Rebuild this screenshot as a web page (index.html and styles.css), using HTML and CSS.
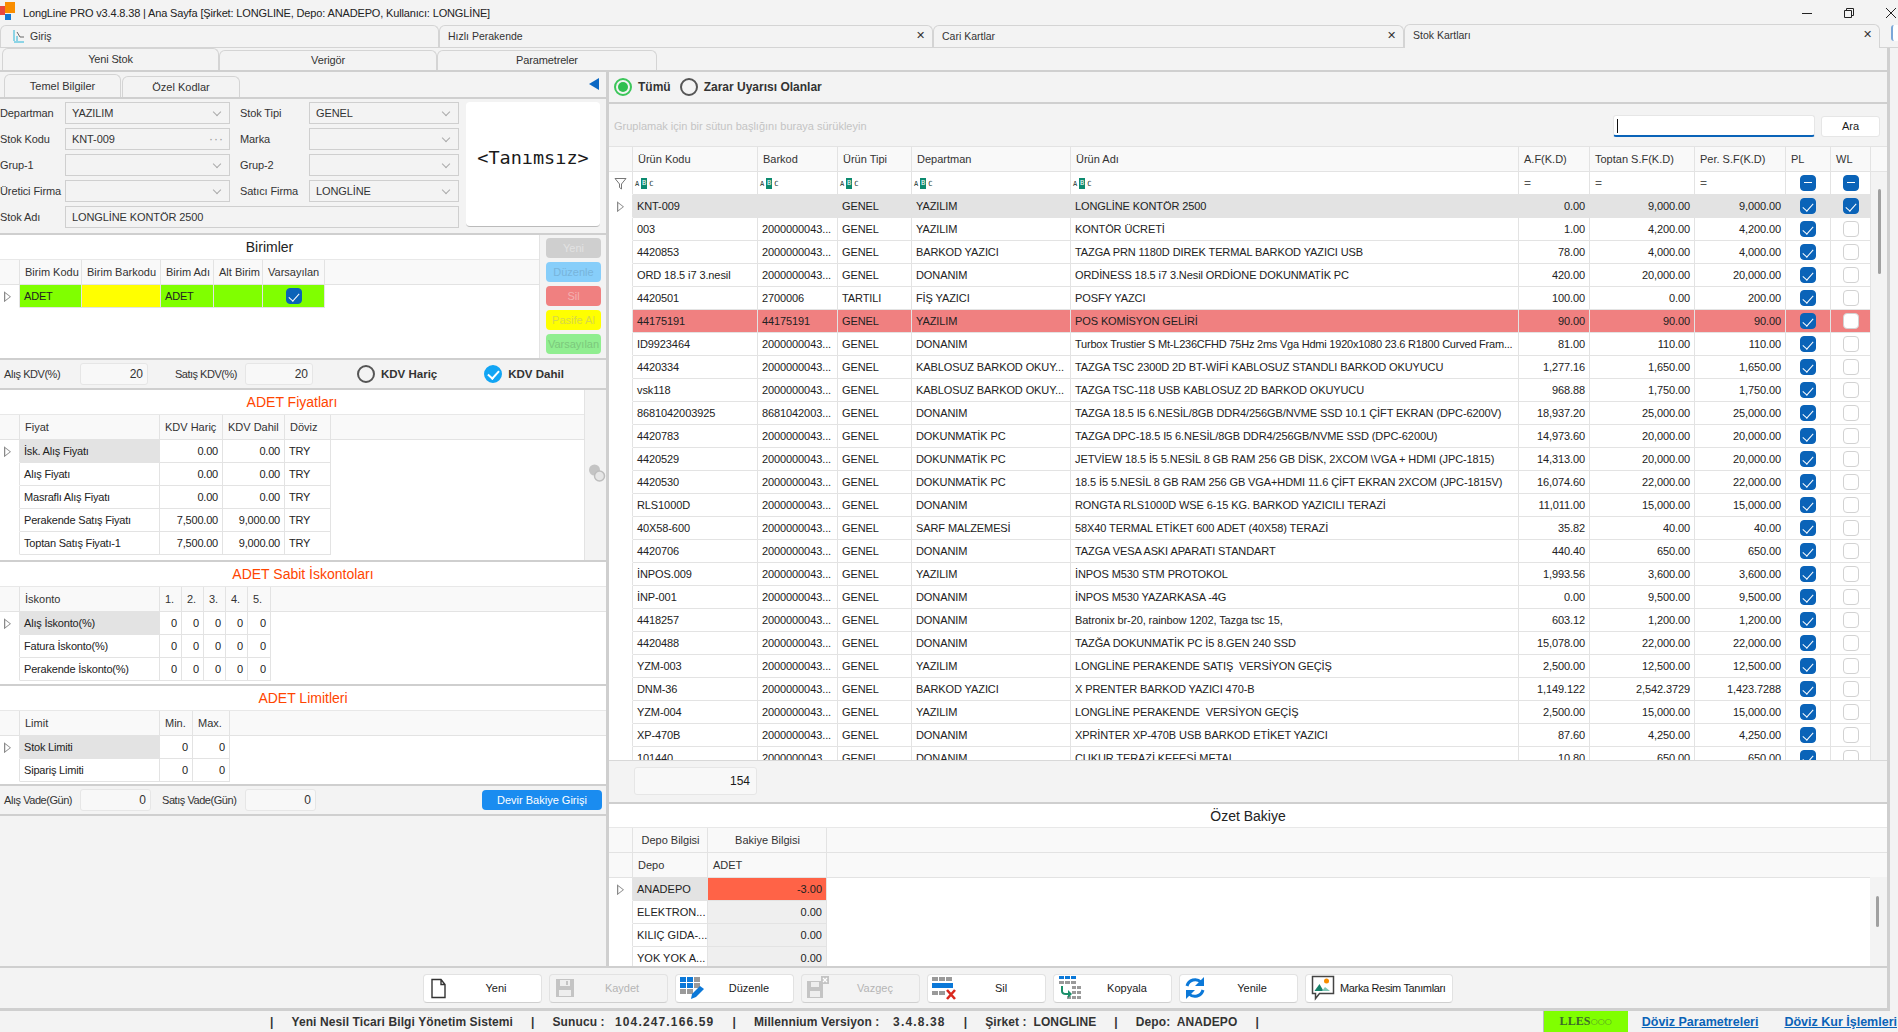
FILE: index.html
```html
<!DOCTYPE html>
<html lang="tr">

<head>
    <meta charset="UTF-8">
    <meta name="viewport" content="width=device-width, initial-scale=1.0">
    <title>LongLine PRO</title>
    <link rel="stylesheet" href="styles.css">
</head>

<body>

    <!-- Baslik -->
    <div class="titlebar">
        <svg class="app-logo" width="16" height="19" viewBox="0 0 16 19">
            <rect x="0" y="4" width="5" height="9" fill="#e8483f"/>
            <rect x="5" y="0" width="10" height="11" fill="#f98d00"/>
            <rect x="5" y="12" width="6" height="6" fill="#1277d3"/>
        </svg>
        <span class="app-title">LongLine PRO v3.4.8.38 | Ana Sayfa [Şirket: LONGLINE, Depo: ANADEPO, Kullanıcı: LONGLİNE]</span>
        <div class="winbtns">
            <svg width="12" height="12" viewBox="0 0 12 12"><path d="M1 6.5h10" stroke="#222" fill="none"/></svg>
            <svg width="12" height="12" viewBox="0 0 12 12"><path d="M1.5 3.5h7v7h-7zM3.5 3.5v-2h7v7h-2" stroke="#222" fill="none"/></svg>
            <svg width="12" height="12" viewBox="0 0 12 12"><path d="M1 1l10 10M11 1L1 11" stroke="#222" fill="none"/></svg>
        </div>
    </div>

    <div class="doc-tabs">
        <div class="doc-tab tab-giris">
            <svg width="13" height="16" viewBox="0 0 13 16"><path d="M2 2v11M5 8v5M2 14h10" stroke="#27b5d8" fill="none"/><path d="M5 4l3 5h4" stroke="#666" fill="none"/></svg>
            Giriş
        </div>
        <div class="doc-tab tab-hizli">Hızlı Perakende <span class="tab-x">✕</span></div>
        <div class="doc-tab tab-cari">Cari Kartlar <span class="tab-x">✕</span></div>
        <div class="doc-tab tab-stok">Stok Kartları <span class="tab-x">✕</span></div>
        <div class="doc-more"></div>
    </div>

    <div class="page">
        <div class="sub-tabs">
            <div class="sub-tab active">Yeni Stok</div>
            <div class="sub-tab">Verigör</div>
            <div class="sub-tab">Parametreler</div>
        </div>

        <div class="main">

            <!-- Sol taraf -->
            <div class="left">
                <div class="left-tabs">
                    <div class="left-tab active">Temel Bilgiler</div>
                    <div class="left-tab">Özel Kodlar</div>
                    <div class="collapse"></div>
                </div>

                <div class="form-box">
                    <div class="form-grid">
                        <label>Departman</label>
                        <div class="field combo">YAZILIM</div>
                        <label class="lbl2">Stok Tipi</label>
                        <div class="field combo">GENEL</div>
                        <label>Stok Kodu</label>
                        <div class="field dots">KNT-009<span>···</span></div>
                        <label class="lbl2">Marka</label>
                        <div class="field combo"></div>
                        <label>Grup-1</label>
                        <div class="field combo"></div>
                        <label class="lbl2">Grup-2</label>
                        <div class="field combo"></div>
                        <label>Üretici Firma</label>
                        <div class="field combo"></div>
                        <label class="lbl2">Satıcı Firma</label>
                        <div class="field combo">LONGLİNE</div>
                        <label>Stok Adı</label>
                        <div class="field wide">LONGLİNE KONTÖR 2500</div>
                    </div>
                    <div class="pic-box">&lt;Tanımsız&gt;</div>
                </div>

                <div class="units">
                    <div class="units-main">
                        <div class="sec-title">Birimler</div>
                        <table class="grid t-units">
                            <tr>
                                <th class="ind"></th><th>Birim Kodu</th><th>Birim Barkodu</th><th>Birim Adı</th><th>Alt Birim</th><th>Varsayılan</th><th class="rest"></th>
                            </tr>
                            <tr>
                                <td class="ind"><i class="arrow"></i></td>
                                <td class="lime">ADET</td><td class="yellow"></td><td class="lime">ADET</td><td class="lime"></td>
                                <td class="lime ctr"><i class="chk on"></i></td>
                            </tr>
                        </table>
                    </div>
                    <div class="units-btns">
                        <div class="ubtn u-yeni">Yeni</div>
                        <div class="ubtn u-duz">Düzenle</div>
                        <div class="ubtn u-sil">Sil</div>
                        <div class="ubtn u-pas">Pasife Al</div>
                        <div class="ubtn u-var">Varsayılan</div>
                    </div>
                </div>

                <div class="kdv-row">
                    <span class="k-lbl">Alış KDV(%)</span>
                    <div class="num-in k-in">20</div>
                    <span class="k-lbl2">Satış KDV(%)</span>
                    <div class="num-in k-in">20</div>
                    <i class="radio r-haric"></i><b class="r-text">KDV Hariç</b>
                    <i class="radio checked r-dahil"></i><b class="r-text">KDV Dahil</b>
                </div>

                <div class="prices">
                    <div class="prices-main">
                        <div class="sec-title red">ADET Fiyatları</div>
                        <table class="grid t-price">
                            <tr><th class="ind"></th><th>Fiyat</th><th>KDV Hariç</th><th>KDV Dahil</th><th>Döviz</th><th class="rest"></th></tr>
                            <tr><td class="ind"><i class="arrow"></i></td><td class="sel">İsk. Alış Fiyatı</td><td class="r">0.00</td><td class="r">0.00</td><td>TRY</td></tr>
                            <tr><td class="ind"></td><td>Alış Fiyatı</td><td class="r">0.00</td><td class="r">0.00</td><td>TRY</td></tr>
                            <tr><td class="ind"></td><td>Masraflı Alış Fiyatı</td><td class="r">0.00</td><td class="r">0.00</td><td>TRY</td></tr>
                            <tr><td class="ind"></td><td>Perakende Satış Fiyatı</td><td class="r">7,500.00</td><td class="r">9,000.00</td><td>TRY</td></tr>
                            <tr><td class="ind"></td><td>Toptan Satış Fiyatı-1</td><td class="r">7,500.00</td><td class="r">9,000.00</td><td>TRY</td></tr>
                        </table>
                    </div>
                    <div class="coin-strip">
                        <svg width="18" height="20" viewBox="0 0 18 20">
                            <circle cx="6.5" cy="7" r="5.5" fill="#c4c4c4"/>
                            <circle cx="11.5" cy="13" r="5" fill="#e6e6e6" stroke="#bdbdbd" stroke-width="1.5"/>
                        </svg>
                    </div>
                </div>

                <div class="section sec-disc">
                    <div class="sec-title red">ADET Sabit İskontoları</div>
                    <table class="grid t-disc">
                        <tr><th class="ind"></th><th>İskonto</th><th>1.</th><th>2.</th><th>3.</th><th>4.</th><th>5.</th><th class="rest"></th></tr>
                        <tr><td class="ind"><i class="arrow"></i></td><td class="sel">Alış İskonto(%)</td><td class="r">0</td><td class="r">0</td><td class="r">0</td><td class="r">0</td><td class="r">0</td></tr>
                        <tr><td class="ind"></td><td>Fatura İskonto(%)</td><td class="r">0</td><td class="r">0</td><td class="r">0</td><td class="r">0</td><td class="r">0</td></tr>
                        <tr><td class="ind"></td><td>Perakende İskonto(%)</td><td class="r">0</td><td class="r">0</td><td class="r">0</td><td class="r">0</td><td class="r">0</td></tr>
                    </table>
                </div>

                <div class="section sec-limit">
                    <div class="sec-title red">ADET Limitleri</div>
                    <table class="grid t-limit">
                        <tr><th class="ind"></th><th>Limit</th><th>Min.</th><th>Max.</th><th class="rest"></th></tr>
                        <tr><td class="ind"><i class="arrow"></i></td><td class="sel">Stok Limiti</td><td class="r">0</td><td class="r">0</td></tr>
                        <tr><td class="ind"></td><td>Sipariş Limiti</td><td class="r">0</td><td class="r">0</td></tr>
                    </table>
                </div>

                <div class="vade-row">
                    <span class="k-lbl">Alış Vade(Gün)</span>
                    <div class="num-in v-in">0</div>
                    <span class="v-lbl2">Satış Vade(Gün)</span>
                    <div class="num-in v-in">0</div>
                    <div class="devir-btn">Devir Bakiye Girişi</div>
                </div>
            </div>

            <!-- Sag taraf -->
            <div class="right">
                <div class="radio-bar">
                    <i class="radio green"></i><b class="r-text">Tümü</b>
                    <i class="radio r-zarar"></i><b class="r-text">Zarar Uyarısı Olanlar</b>
                </div>

                <div class="group-bar">
                    <span class="group-hint">Gruplamak için bir sütun başlığını buraya sürükleyin</span>
                    <div class="search-in"><i class="caret"></i></div>
                    <div class="ara-btn">Ara</div>
                </div>

                <div class="stock-wrap">
                    <table class="grid t-stock">
                        <tr>
                            <th class="ind"></th><th>Ürün Kodu</th><th>Barkod</th><th>Ürün Tipi</th><th>Departman</th><th>Ürün Adı</th><th>A.F(K.D)</th><th>Toptan S.F(K.D)</th><th>Per. S.F(K.D)</th><th>PL</th><th>WL</th><th class="rest"></th>
                        </tr>
                        <tr class="filter">
                            <td class="ind"><svg class="funnel" width="13" height="13" viewBox="0 0 13 13"><path d="M1 1.5h11L7.5 7v5L5.5 10.5V7z" fill="none" stroke="#777"/></svg></td>
                            <td><span class="abc">A<em>B</em>C</span></td><td><span class="abc">A<em>B</em>C</span></td><td><span class="abc">A<em>B</em>C</span></td><td><span class="abc">A<em>B</em>C</span></td><td><span class="abc">A<em>B</em>C</span></td>
                            <td>=</td><td>=</td><td>=</td>
                            <td class="ctr"><i class="chk mid"></i></td><td class="ctr"><i class="chk mid"></i></td>
                        </tr>
                        <tr class="cur"><td class="ind"><i class="arrow"></i></td><td>KNT-009</td><td></td><td>GENEL</td><td>YAZILIM</td><td>LONGLİNE KONTÖR 2500</td><td>0.00</td><td>9,000.00</td><td>9,000.00</td><td class="ctr"><i class="chk on"></i></td><td class="ctr"><i class="chk on"></i></td></tr>
                        <tr><td class="ind"></td><td>003</td><td>2000000043...</td><td>GENEL</td><td>YAZILIM</td><td>KONTÖR ÜCRETİ</td><td>1.00</td><td>4,200.00</td><td>4,200.00</td><td class="ctr"><i class="chk on"></i></td><td class="ctr"><i class="chk"></i></td></tr>
                        <tr><td class="ind"></td><td>4420853</td><td>2000000043...</td><td>GENEL</td><td>BARKOD YAZICI</td><td>TAZGA PRN 1180D DIREK TERMAL BARKOD YAZICI USB</td><td>78.00</td><td>4,000.00</td><td>4,000.00</td><td class="ctr"><i class="chk on"></i></td><td class="ctr"><i class="chk"></i></td></tr>
                        <tr><td class="ind"></td><td>ORD 18.5 i7 3.nesil</td><td>2000000043...</td><td>GENEL</td><td>DONANIM</td><td>ORDİNESS 18.5 i7 3.Nesil ORDİONE DOKUNMATİK PC</td><td>420.00</td><td>20,000.00</td><td>20,000.00</td><td class="ctr"><i class="chk on"></i></td><td class="ctr"><i class="chk"></i></td></tr>
                        <tr><td class="ind"></td><td>4420501</td><td>2700006</td><td>TARTILI</td><td>FİŞ YAZICI</td><td>POSFY YAZCI</td><td>100.00</td><td>0.00</td><td>200.00</td><td class="ctr"><i class="chk on"></i></td><td class="ctr"><i class="chk"></i></td></tr>
                        <tr class="loss"><td class="ind"></td><td>44175191</td><td>44175191</td><td>GENEL</td><td>YAZILIM</td><td>POS KOMİSYON GELİRİ</td><td>90.00</td><td>90.00</td><td>90.00</td><td class="ctr"><i class="chk on"></i></td><td class="ctr"><i class="chk"></i></td></tr>
                        <tr><td class="ind"></td><td>ID9923464</td><td>2000000043...</td><td>GENEL</td><td>DONANIM</td><td class="tight">Turbox Trustier S Mt-L236CFHD 75Hz 2ms Vga Hdmi 1920x1080 23.6 R1800 Curved Fram...</td><td>81.00</td><td>110.00</td><td>110.00</td><td class="ctr"><i class="chk on"></i></td><td class="ctr"><i class="chk"></i></td></tr>
                        <tr><td class="ind"></td><td>4420334</td><td>2000000043...</td><td>GENEL</td><td>KABLOSUZ BARKOD OKUY...</td><td>TAZGA TSC 2300D 2D BT-WİFİ KABLOSUZ STANDLI BARKOD OKUYUCU</td><td>1,277.16</td><td>1,650.00</td><td>1,650.00</td><td class="ctr"><i class="chk on"></i></td><td class="ctr"><i class="chk"></i></td></tr>
                        <tr><td class="ind"></td><td>vsk118</td><td>2000000043...</td><td>GENEL</td><td>KABLOSUZ BARKOD OKUY...</td><td>TAZGA TSC-118 USB KABLOSUZ 2D BARKOD OKUYUCU</td><td>968.88</td><td>1,750.00</td><td>1,750.00</td><td class="ctr"><i class="chk on"></i></td><td class="ctr"><i class="chk"></i></td></tr>
                        <tr><td class="ind"></td><td>8681042003925</td><td>8681042003...</td><td>GENEL</td><td>DONANIM</td><td>TAZGA 18.5 I5 6.NESİL/8GB DDR4/256GB/NVME SSD 10.1 ÇİFT EKRAN (DPC-6200V)</td><td>18,937.20</td><td>25,000.00</td><td>25,000.00</td><td class="ctr"><i class="chk on"></i></td><td class="ctr"><i class="chk"></i></td></tr>
                        <tr><td class="ind"></td><td>4420783</td><td>2000000043...</td><td>GENEL</td><td>DOKUNMATİK PC</td><td>TAZGA DPC-18.5 I5 6.NESİL/8GB DDR4/256GB/NVME SSD (DPC-6200U)</td><td>14,973.60</td><td>20,000.00</td><td>20,000.00</td><td class="ctr"><i class="chk on"></i></td><td class="ctr"><i class="chk"></i></td></tr>
                        <tr><td class="ind"></td><td>4420529</td><td>2000000043...</td><td>GENEL</td><td>DOKUNMATİK PC</td><td>JETVİEW 18.5 İ5 5.NESİL 8 GB RAM 256 GB DİSK, 2XCOM \VGA + HDMI (JPC-1815)</td><td>14,313.00</td><td>20,000.00</td><td>20,000.00</td><td class="ctr"><i class="chk on"></i></td><td class="ctr"><i class="chk"></i></td></tr>
                        <tr><td class="ind"></td><td>4420530</td><td>2000000043...</td><td>GENEL</td><td>DOKUNMATİK PC</td><td>18.5 İ5 5.NESİL 8 GB RAM 256 GB VGA+HDMI 11.6 ÇİFT EKRAN 2XCOM (JPC-1815V)</td><td>16,074.60</td><td>22,000.00</td><td>22,000.00</td><td class="ctr"><i class="chk on"></i></td><td class="ctr"><i class="chk"></i></td></tr>
                        <tr><td class="ind"></td><td>RLS1000D</td><td>2000000043...</td><td>GENEL</td><td>DONANIM</td><td>RONGTA RLS1000D WSE 6-15 KG. BARKOD YAZICILI TERAZİ</td><td>11,011.00</td><td>15,000.00</td><td>15,000.00</td><td class="ctr"><i class="chk on"></i></td><td class="ctr"><i class="chk"></i></td></tr>
                        <tr><td class="ind"></td><td>40X58-600</td><td>2000000043...</td><td>GENEL</td><td>SARF MALZEMESİ</td><td>58X40 TERMAL ETİKET 600 ADET (40X58) TERAZİ</td><td>35.82</td><td>40.00</td><td>40.00</td><td class="ctr"><i class="chk on"></i></td><td class="ctr"><i class="chk"></i></td></tr>
                        <tr><td class="ind"></td><td>4420706</td><td>2000000043...</td><td>GENEL</td><td>DONANIM</td><td>TAZGA VESA ASKI APARATI STANDART</td><td>440.40</td><td>650.00</td><td>650.00</td><td class="ctr"><i class="chk on"></i></td><td class="ctr"><i class="chk"></i></td></tr>
                        <tr><td class="ind"></td><td>İNPOS.009</td><td>2000000043...</td><td>GENEL</td><td>YAZILIM</td><td>İNPOS M530 STM PROTOKOL</td><td>1,993.56</td><td>3,600.00</td><td>3,600.00</td><td class="ctr"><i class="chk on"></i></td><td class="ctr"><i class="chk"></i></td></tr>
                        <tr><td class="ind"></td><td>İNP-001</td><td>2000000043...</td><td>GENEL</td><td>DONANIM</td><td>İNPOS M530 YAZARKASA -4G</td><td>0.00</td><td>9,500.00</td><td>9,500.00</td><td class="ctr"><i class="chk on"></i></td><td class="ctr"><i class="chk"></i></td></tr>
                        <tr><td class="ind"></td><td>4418257</td><td>2000000043...</td><td>GENEL</td><td>DONANIM</td><td>Batronix br-20, rainbow 1202, Tazga tsc 15,</td><td>603.12</td><td>1,200.00</td><td>1,200.00</td><td class="ctr"><i class="chk on"></i></td><td class="ctr"><i class="chk"></i></td></tr>
                        <tr><td class="ind"></td><td>4420488</td><td>2000000043...</td><td>GENEL</td><td>DONANIM</td><td>TAZĞA DOKUNMATİK PC İ5 8.GEN 240 SSD</td><td>15,078.00</td><td>22,000.00</td><td>22,000.00</td><td class="ctr"><i class="chk on"></i></td><td class="ctr"><i class="chk"></i></td></tr>
                        <tr><td class="ind"></td><td>YZM-003</td><td>2000000043...</td><td>GENEL</td><td>YAZILIM</td><td>LONGLİNE PERAKENDE SATIŞ&nbsp; VERSİYON GEÇİŞ</td><td>2,500.00</td><td>12,500.00</td><td>12,500.00</td><td class="ctr"><i class="chk on"></i></td><td class="ctr"><i class="chk"></i></td></tr>
                        <tr><td class="ind"></td><td>DNM-36</td><td>2000000043...</td><td>GENEL</td><td>BARKOD YAZICI</td><td>X PRENTER BARKOD YAZICI 470-B</td><td>1,149.122</td><td>2,542.3729</td><td>1,423.7288</td><td class="ctr"><i class="chk on"></i></td><td class="ctr"><i class="chk"></i></td></tr>
                        <tr><td class="ind"></td><td>YZM-004</td><td>2000000043...</td><td>GENEL</td><td>YAZILIM</td><td>LONGLİNE PERAKENDE&nbsp; VERSİYON GEÇİŞ</td><td>2,500.00</td><td>15,000.00</td><td>15,000.00</td><td class="ctr"><i class="chk on"></i></td><td class="ctr"><i class="chk"></i></td></tr>
                        <tr><td class="ind"></td><td>XP-470B</td><td>2000000043...</td><td>GENEL</td><td>DONANIM</td><td>XPRİNTER XP-470B USB BARKOD ETİKET YAZICI</td><td>87.60</td><td>4,250.00</td><td>4,250.00</td><td class="ctr"><i class="chk on"></i></td><td class="ctr"><i class="chk"></i></td></tr>
                        <tr><td class="ind"></td><td>101440</td><td>2000000043...</td><td>GENEL</td><td>DONANIM</td><td>ÇUKUR TERAZİ KEFESİ METAL</td><td>10.80</td><td>650.00</td><td>650.00</td><td class="ctr"><i class="chk on"></i></td><td class="ctr"><i class="chk"></i></td></tr>
                    </table>
                    <div class="vscroll v-stock"></div>
                </div>

                <div class="total-row">
                    <div class="total-box">154</div>
                </div>

                <div class="balance">
                    <div class="sec-title">Özet Bakiye</div>
                    <table class="grid t-bal">
                        <tr class="band"><th class="ind"></th><th>Depo Bilgisi</th><th>Bakiye Bilgisi</th><th class="rest"></th></tr>
                        <tr class="heads"><th class="ind"></th><th>Depo</th><th>ADET</th><th class="rest"></th></tr>
                        <tr><td class="ind"><i class="arrow"></i></td><td class="sel">ANADEPO</td><td class="r minus">-3.00</td></tr>
                        <tr><td class="ind"></td><td>ELEKTRON...</td><td class="r zero">0.00</td></tr>
                        <tr><td class="ind"></td><td>KILIÇ GIDA-...</td><td class="r zero">0.00</td></tr>
                        <tr><td class="ind"></td><td>YOK YOK A...</td><td class="r zero">0.00</td></tr>
                    </table>
                    <div class="bal-side"></div>
                    <div class="vscroll v-bal"></div>
                </div>
            </div>
        </div>

        <!-- Alt butonlar -->
        <div class="toolbar">
            <div class="tbtn">
                <svg width="24" height="24" viewBox="0 0 24 24"><path d="M5 3.5h9l4 5v13H5z M14 3.5v5h4" fill="#fff" stroke="#333" stroke-width="1.4"/></svg>
                <span>Yeni</span>
            </div>
            <div class="tbtn off">
                <svg width="24" height="24" viewBox="0 0 24 24"><path d="M3 3h18v18H3z" fill="#c4c4c4"/><path d="M7 4h10v6H7z" fill="#eee"/><path d="M13 5h2v4h-2z" fill="#c4c4c4"/><path d="M6 14h12v6H6z" fill="#eee"/></svg>
                <span>Kaydet</span>
            </div>
            <div class="tbtn">
                <svg width="26" height="26" viewBox="0 0 26 26">
                    <path d="M1 2h6v5H1zM8 2h6v5H8z" fill="#0b78d8"/><path d="M15 2h6v5h-6z" fill="#9a9a9a"/>
                    <path d="M1 8h6v5H1zM8 8h6v5H8z" fill="#0b78d8"/><path d="M15 8h6v5h-6z" fill="#9a9a9a"/>
                    <path d="M1 14h6v5H1zM8 14h6v5H8z" fill="#9a9a9a"/>
                    <path d="M12 24l1-5 8-8 4 3-8 8z" fill="#0b78d8"/>
                </svg>
                <span>Düzenle</span>
            </div>
            <div class="tbtn off">
                <svg width="26" height="26" viewBox="0 0 26 26"><path d="M2 6h16v17H2z" fill="#c4c4c4"/><path d="M6 7h8v5H6z" fill="#eee"/><path d="M5 16h10v6H5z" fill="#eee"/><path d="M16 1h8v8h-8z" fill="#c4c4c4"/><path d="M18 3l4 4M22 3l-4 4" stroke="#fff" stroke-width="1.3"/></svg>
                <span>Vazgeç</span>
            </div>
            <div class="tbtn">
                <svg width="26" height="26" viewBox="0 0 26 26">
                    <path d="M1 2h6v4H1zM8 2h6v4H8zM15 2h6v4h-6z" fill="#9a9a9a"/>
                    <path d="M1 8h21v5H1z" fill="#0b78d8"/>
                    <path d="M1 16h6v4H1zM8 16h6v4H8z" fill="#9a9a9a"/>
                    <path d="M16 15l8 9M24 15l-8 9" stroke="#d9281e" stroke-width="2.6"/>
                </svg>
                <span>Sil</span>
            </div>
            <div class="tbtn">
                <svg width="26" height="26" viewBox="0 0 26 26">
                    <path d="M2 1h5v3H2zM8 1h5v3H8zM14 1h5v3h-5z" fill="#0b78d8"/>
                    <path d="M2 6h5v3H2zM8 6h5v3H8zM14 6h5v3h-5zM15 11h4v3h-4zM20 11h4v3h-4zM15 16h4v3h-4zM20 16h4v3h-4zM10 21h4v3h-4zM15 21h4v3h-4zM20 21h4v3h-4z" fill="#9a9a9a"/>
                    <path d="M5 11v5q0 3 4 3h3" fill="none" stroke="#1a8f6a" stroke-width="2"/>
                    <path d="M11 15l4 4-4 4z" fill="#1a8f6a"/>
                </svg>
                <span>Kopyala</span>
            </div>
            <div class="tbtn">
                <svg width="24" height="24" viewBox="0 0 24 24">
                    <path d="M4 10a8.5 8.5 0 0 1 14-4" fill="none" stroke="#0b78d8" stroke-width="3"/>
                    <path d="M21 1v9h-9z" fill="#0b78d8"/>
                    <path d="M20 14a8.5 8.5 0 0 1-14 4" fill="none" stroke="#0b78d8" stroke-width="3"/>
                    <path d="M3 23v-9h9z" fill="#0b78d8"/>
                </svg>
                <span>Yenile</span>
            </div>
            <div class="tbtn wide">
                <svg width="24" height="26" viewBox="0 0 24 26">
                    <path d="M1.5 1.5h21v17h-14l-4 5v-5h-3z" fill="#fff" stroke="#444" stroke-width="1.5"/>
                    <circle cx="15.500" cy="6" r="2.500" fill="#f98d00"/>
                    <path d="M3.500 16l5-7 4 7z" fill="#14806a"/>
                    <path d="M11 16l3-4 5 4z" fill="#7cc4b4"/>
                </svg>
                <span>Marka Resim Tanımları</span>
            </div>
        </div>
    </div>

    <!-- Durum cubugu -->
    <div class="statusbar">
        <span>|</span>
        <span>Yeni Nesil Ticari Bilgi Yönetim Sistemi</span>
        <span>|</span>
        <span>Sunucu :&nbsp;&nbsp; <em class="val">104.247.166.59</em></span>
        <span>|</span>
        <span>Millennium Versiyon :&nbsp;&nbsp;&nbsp; <em class="val">3.4.8.38</em></span>
        <span>|</span>
        <span>Şirket :&nbsp; LONGLINE</span>
        <span>|</span>
        <span>Depo:&nbsp; ANADEPO</span>
        <span>|</span>
        <div class="lles">LLES<small>○○○</small></div>
        <a href="#" class="link l1">Döviz Parametreleri</a>
        <a href="#" class="link l2">Döviz Kur İşlemleri</a>
    </div>

</body>

</html>
```

FILE: styles.css
```css
* {
    box-sizing: border-box;
}

body {
    margin: 0;
    width: 1898px;
    height: 1032px;
    overflow: hidden;
    background: #f3f3f3;
    color: #1a1a1a;
    font-family: 'Liberation Sans', Arial, sans-serif;
    font-size: 11px;
    display: flex;
    flex-direction: column;
}

/* Baslik */
.titlebar {
    height: 25px;
    flex: none;
    display: flex;
    align-items: center;
}

.app-logo {
    margin-top: -2px;
}

.app-title {
    margin-left: 7px;
    font-size: 11px;
    letter-spacing: -0.15px;
    color: #222;
}

.winbtns {
    margin-left: auto;
    display: flex;
    gap: 30px;
    padding-right: 1px;
}

/* Ust sekmeler */
.doc-tabs {
    height: 23px;
    flex: none;
    display: flex;
    align-items: flex-end;
    border-bottom: 1px solid #d4d4d4;
}

.doc-tab {
    height: 22px;
    display: flex;
    align-items: center;
    gap: 5px;
    padding: 0 7px 2px 8px;
    border: 1px solid #d4d4d4;
    border-bottom: none;
    border-radius: 6px 6px 0 0;
    font-size: 10.500px;
    color: #333;
    position: relative;
}

.tab-giris { width: 439px; padding-left: 11px; }
.tab-hizli { width: 494px; }
.tab-cari { width: 471px; }

.tab-stok {
    width: 476px;
    height: 24px;
    margin-bottom: -1px;
    background: #f3f3f3;
    padding-bottom: 4px;
}

.tab-x {
    margin-left: auto;
    font-size: 11px;
    color: #333;
}

.doc-more {
    width: 7px;
    height: 16px;
    margin: 0 0 6px 11px;
    background: #fff;
    border-left: 2px solid #7aa7d8;
    border-radius: 3px 0 0 3px;
}

.page {
    width: 1890px;
    flex: 1;
    display: flex;
    flex-direction: column;
    border-right: 3px solid #cfcfcf;
    min-height: 0;
}

/* Alt sekmeler */
.sub-tabs {
    height: 24px;
    flex: none;
    display: flex;
    align-items: flex-end;
    padding-left: 2px;
    border-bottom: 2px solid #cfcfcf;
}

.sub-tab {
    width: 218px;
    height: 20px;
    display: flex;
    align-items: center;
    justify-content: center;
    border: 1px solid #d4d4d4;
    border-bottom: none;
    border-radius: 6px 6px 0 0;
    padding-bottom: 1px;
    letter-spacing: -0.15px;
    color: #333;
}

.sub-tab:nth-child(3) { width: 220px; }
.sub-tab.active { width: 217px; height: 22px; }

.main {
    flex: 1;
    display: flex;
    min-height: 0;
}

/* Sol taraf */
.left {
    width: 609px;
    flex: none;
    border-right: 3px solid #cfcfcf;
    display: flex;
    flex-direction: column;
}

.left-tabs {
    height: 27px;
    flex: none;
    display: flex;
    align-items: flex-end;
    padding-left: 4px;
    border-bottom: 2px solid #cfcfcf;
    padding-top: 2px;
}

.left-tab {
    width: 118px;
    height: 21px;
    display: flex;
    align-items: center;
    justify-content: center;
    border: 1px solid #d4d4d4;
    border-bottom: none;
    border-radius: 6px 6px 0 0;
    color: #333;
}

.left-tab.active { width: 117px; height: 23px; }
.left-tab + .left-tab { margin-left: 1px; }

.collapse {
    margin: 0 7px 7px auto;
    width: 0;
    height: 0;
    border-top: 6px solid transparent;
    border-bottom: 6px solid transparent;
    border-right: 10px solid #0b68c4;
}

.form-box {
    height: 136px;
    flex: none;
    display: flex;
    padding-top: 3px;
    border-bottom: 2px solid #cfcfcf;
}

.form-grid {
    width: 459px;
    display: grid;
    grid-template-columns: 65px 165px 79px 150px;
    grid-auto-rows: 22px;
    row-gap: 4px;
}

.form-grid label {
    display: flex;
    align-items: center;
    letter-spacing: -0.1px;
    color: #333;
    white-space: nowrap;
}

.form-grid .lbl2 {
    padding-left: 10px;
}

.field {
    border: 1px solid #cfcfcf;
    display: flex;
    align-items: center;
    padding-left: 6px;
    font-size: 11px;
    letter-spacing: -0.1px;
    color: #333;
    position: relative;
}

.field.wide {
    grid-column: span 3;
}

.combo::after {
    content: "";
    position: absolute;
    right: 9px;
    top: 6px;
    width: 5px;
    height: 5px;
    border-right: 1px solid #aaa;
    border-bottom: 1px solid #aaa;
    transform: rotate(45deg);
}

.dots span {
    position: absolute;
    right: 5px;
    color: #999;
    font-size: 12px;
    letter-spacing: 1px;
}

.pic-box {
    width: 134px;
    height: 125px;
    margin-left: 7px;
    background: #fff;
    border-bottom: 1px solid #bbb;
    border-radius: 4px;
    display: flex;
    align-items: center;
    justify-content: center;
    font-family: 'DejaVu Sans Mono', monospace;
    font-size: 18.500px;
    padding-bottom: 13px;
}

/* Tablolar */
.grid {
    border-collapse: separate;
    border-spacing: 0;
    table-layout: fixed;
    background: transparent;
}

.grid th,
.grid td {
    box-sizing: border-box;
    padding: 0 4px;
    border-right: 1px solid #e3e3e3;
    border-bottom: 1px solid #e3e3e3;
    font-weight: normal;
    text-align: left;
    white-space: nowrap;
    overflow: hidden;
    height: 23px;
    color: #222;
}

.grid th {
    height: 25px;
    padding-left: 5px;
    background: #f9f9f9;
    color: #333;
}

.grid td {
    background: #fff;
}

.left .grid td {
    letter-spacing: -0.2px;
}

.grid .ind {
    width: 20px;
    padding: 0;
    border-bottom-color: transparent;
    text-align: center;
}

.left .grid .ind {
    padding-right: 4px;
}

.grid th.ind {
    border-bottom-color: #e3e3e3;
}

.grid th.rest {
    width: auto;
    border-right: none;
}

.grid .r {
    text-align: right;
}

.grid .ctr {
    text-align: center;
    padding: 0;
}

.grid td.sel {
    background: #e3e3e3;
}

.arrow {
    display: inline-block;
    width: 7px;
    height: 11px;
    background: #8a8a8a;
    clip-path: polygon(0 0, 100% 50%, 0 100%, 0 0, 18% 18%, 18% 82%, 82% 50%, 18% 18%);
    vertical-align: middle;
}

.chk {
    display: inline-block;
    width: 16px;
    height: 16px;
    border: 1px solid #d2d2d2;
    border-radius: 4px;
    background: #fff;
    vertical-align: middle;
    position: relative;
}

.chk.on,
.chk.mid {
    background: #0a63b8;
    border-color: #0a63b8;
}

.chk.on::after {
    content: "";
    position: absolute;
    left: 4px;
    top: 2px;
    width: 5px;
    height: 9px;
    border-right: 1px solid #fff;
    border-bottom: 1px solid #fff;
    transform: rotate(42deg);
}

.chk.mid::after {
    content: "";
    position: absolute;
    left: 3px;
    top: 6px;
    width: 8px;
    height: 1px;
    border-top: 1px solid #fff;
}

.sec-title {
    height: 25px;
    display: flex;
    align-items: center;
    justify-content: center;
    font-size: 14px;
    color: #222;
    border-bottom: 1px solid #e8e8e8;
    background: #fff;
}

.sec-title.red {
    color: #ff4500;
}

/* Birimler */
.units {
    height: 125px;
    flex: none;
    display: flex;
    border-bottom: 2px solid #cfcfcf;
}

.units-main {
    width: 540px;
    background: #fff;
    border-right: 1px solid #e3e3e3;
}

.t-units {
    width: 100%;
}

.t-units th:nth-child(2) { width: 62px; }
.t-units th:nth-child(3) { width: 79px; }
.t-units th:nth-child(4) { width: 53px; }
.t-units th:nth-child(5) { width: 49px; }
.t-units th:nth-child(6) { width: 62px; }

.grid td.lime { background: #80ff00; }
.grid td.yellow { background: #ffff00; }

.units-btns {
    flex: 1;
    padding: 3px 5px 0 6px;
    display: flex;
    flex-direction: column;
    gap: 4px;
}

.ubtn {
    height: 20px;
    border-radius: 4px;
    display: flex;
    align-items: center;
    justify-content: center;
}

.u-yeni { background: #cfcfcf; color: #e2e2e2; }
.u-duz { background: #87cefa; color: #78b4da; }
.u-sil { background: #f08080; color: #f4b0b0; }
.u-pas { background: #ffff00; color: #d8d848; }
.u-var { background: #90ee90; color: #7cc87c; }

/* KDV */
.kdv-row,
.vade-row {
    height: 30px;
    flex: none;
    display: flex;
    align-items: center;
    border-bottom: 2px solid #cfcfcf;
    color: #333;
}

.k-lbl {
    width: 80px;
    padding-left: 4px;
    letter-spacing: -0.45px;
    white-space: nowrap;
}

.k-lbl2 {
    width: 70px;
    margin-left: 27px;
    letter-spacing: -0.5px;
    white-space: nowrap;
}

.num-in {
    height: 22px;
    background: #f8f8f8;
    border: 1px solid #e6e6e6;
    border-radius: 3px;
    display: flex;
    align-items: center;
    justify-content: flex-end;
    padding-right: 4px;
    font-size: 12px;
}

.k-in { width: 68px; }
.v-in { width: 71px; }

.radio {
    display: inline-block;
    width: 18px;
    height: 18px;
    border: 2px solid #555;
    border-radius: 50%;
    flex: none;
    position: relative;
}

.radio.checked {
    background: #12a5f4;
    border-color: #12a5f4;
}

.radio.checked::after {
    content: "";
    position: absolute;
    left: 4px;
    top: 1px;
    width: 5px;
    height: 9px;
    border-right: 2px solid #fff;
    border-bottom: 2px solid #fff;
    transform: rotate(42deg);
}

.radio.green {
    border-color: #3cc65a;
}

.radio.green::after {
    content: "";
    position: absolute;
    left: 2px;
    top: 2px;
    width: 10px;
    height: 10px;
    border-radius: 50%;
    background: #2fbf4f;
}

.r-text {
    margin-left: 6px;
    font-size: 11.500px;
    color: #333;
}

.radio-bar .r-text {
    font-size: 12px;
}

.r-haric { margin-left: 44px; }
.r-dahil { margin-left: 47px; }

/* Fiyatlar */
.prices {
    height: 172px;
    flex: none;
    display: flex;
    border-bottom: 2px solid #cfcfcf;
}

.prices-main {
    width: 584px;
    background: #fff;
}

.coin-strip {
    flex: 1;
    display: flex;
    align-items: center;
    justify-content: center;
    border-left: 1px solid #e3e3e3;
    padding: 0 0 4px 2px;
}

.t-price,
.t-disc,
.t-limit {
    width: 100%;
}

.t-price th:nth-child(2),
.t-disc th:nth-child(2),
.t-limit th:nth-child(2) { width: 140px; }

.t-price th:nth-child(3) { width: 63px; }
.t-price th:nth-child(4) { width: 62px; }
.t-price th:nth-child(5) { width: 46px; }

.t-disc th:nth-child(3),
.t-disc th:nth-child(4),
.t-disc th:nth-child(5),
.t-disc th:nth-child(6) { width: 22px; }
.t-disc th:nth-child(7) { width: 23px; }

.t-limit th:nth-child(3) { width: 33px; }
.t-limit th:nth-child(4) { width: 37px; }

.section {
    flex: none;
    background: #fff;
    border-bottom: 2px solid #cfcfcf;
}

.sec-disc { height: 124px; }
.sec-limit { height: 100px; }

.vade-row {
    height: 30px;
}

.v-lbl2 {
    width: 83px;
    margin-left: 11px;
    letter-spacing: -0.45px;
    white-space: nowrap;
}

.devir-btn {
    width: 120px;
    height: 20px;
    margin-left: auto;
    margin-right: 4px;
    background: #1a8cf0;
    color: #fff;
    border-radius: 4px;
    display: flex;
    align-items: center;
    justify-content: center;
}

/* Sag taraf */
.right {
    flex: 1;
    min-width: 0;
    display: flex;
    flex-direction: column;
}

.radio-bar {
    height: 32px;
    flex: none;
    display: flex;
    align-items: center;
    padding-left: 5px;
    border-bottom: 2px solid #cfcfcf;
}

.r-zarar {
    margin-left: 9px;
}

.group-bar {
    height: 42px;
    flex: none;
    display: flex;
    align-items: center;
    padding: 2px 7px 0 5px;
}

.group-hint {
    color: #c4c4c4;
}

.search-in {
    width: 202px;
    height: 22px;
    margin-left: auto;
    background: #fff;
    border: 1px solid #e6e6e6;
    border-bottom: 2px solid #0a63b8;
    border-radius: 3px;
    display: flex;
    align-items: center;
    padding-left: 3px;
}

.caret {
    width: 1px;
    height: 14px;
    background: #111;
}

.ara-btn {
    width: 59px;
    height: 21px;
    margin-left: 6px;
    background: #fff;
    border: 1px solid #e6e6e6;
    border-radius: 3px;
    display: flex;
    align-items: center;
    justify-content: center;
}

/* Stok tablosu */
.stock-wrap {
    height: 615px;
    flex: none;
    overflow: hidden;
    position: relative;
    border-top: 1px solid #e3e3e3;
    border-bottom: 1px solid #d8d8d8;
}

.t-stock {
    width: 100%;
}

.t-stock th:nth-child(1) { width: 24px; }
.t-stock th:nth-child(2) { width: 125px; }
.t-stock th:nth-child(3) { width: 80px; }
.t-stock th:nth-child(4) { width: 74px; }
.t-stock th:nth-child(5) { width: 159px; }
.t-stock th:nth-child(6) { width: 448px; }
.t-stock th:nth-child(7) { width: 71px; }
.t-stock th:nth-child(8) { width: 105px; }
.t-stock th:nth-child(9) { width: 91px; }
.t-stock th:nth-child(10) { width: 45px; }
.t-stock th:nth-child(11) { width: 40px; }

.t-stock tr:not(.filter) td:nth-child(n+7):nth-child(-n+9) {
    text-align: right;
}

.t-stock td {
    letter-spacing: -0.1px;
}

.t-stock td.tight {
    letter-spacing: -0.22px;
}

.t-stock .filter td {
    height: 23px;
    color: #555;
    font-size: 12px;
    padding-left: 5px;
}

.t-stock .filter td.ctr { text-align: center; padding: 0; }
.t-stock .filter td.ind { text-align: center; padding: 0; }

.funnel {
    vertical-align: middle;
}

.abc {
    display: inline-flex;
    align-items: center;
    gap: 2px;
    margin-left: -3px;
    font-family: 'DejaVu Sans Mono', monospace;
    font-size: 7px;
    letter-spacing: 0;
    color: #14302a;
    vertical-align: middle;
}

.abc em {
    font-style: normal;
    width: 6px;
    height: 11px;
    line-height: 11px;
    text-align: center;
    background: #0d8a6f;
    color: #fff;
}

.t-stock .cur td:not(.ind) {
    background: #e3e3e3;
}

.t-stock .loss td:not(.ind) {
    background: #f08080;
}

.vscroll {
    position: absolute;
    width: 3px;
    background: #a0a0a0;
    border-radius: 2px;
}

.v-stock {
    left: 1269px;
    top: 42px;
    height: 85px;
}

.total-row {
    height: 43px;
    flex: none;
    padding: 6px 0 0 25px;
    border-bottom: 2px solid #cfcfcf;
}

.total-box {
    width: 123px;
    height: 28px;
    background: #f8f8f8;
    border: 1px solid #e6e6e6;
    border-radius: 3px;
    display: flex;
    align-items: center;
    justify-content: flex-end;
    padding-right: 6px;
    font-size: 12px;
}

/* Ozet bakiye */
.balance {
    flex: 1;
    overflow: hidden;
    position: relative;
    background: #fff;
}

.balance .sec-title {
    height: 24px;
}

.t-bal {
    width: 100%;
}

.t-bal th:nth-child(1) { width: 24px; }
.t-bal th:nth-child(2) { width: 75px; }
.t-bal th:nth-child(3) { width: 119px; }

.t-bal .band th:not(.ind):not(.rest) {
    text-align: center;
}

.grid td.minus {
    background: #ff6347;
}

.grid td.zero {
    background: #efefef;
}

.bal-side {
    position: absolute;
    right: 0;
    top: 73px;
    bottom: 0;
    width: 17px;
    background: #f3f3f3;
}

.v-bal {
    right: 8px;
    top: 92px;
    height: 31px;
}

/* Alt butonlar */
.toolbar {
    height: 45px;
    flex: none;
    display: flex;
    align-items: center;
    gap: 7px;
    padding-left: 423px;
    border-top: 2px solid #cfcfcf;
    border-bottom: 3px solid #cfcfcf;
    margin-right: -3px;
}

.tbtn {
    width: 119px;
    height: 29px;
    flex: none;
    background: #fff;
    border: 1px solid #e2e2e2;
    border-bottom-color: #cfcfcf;
    border-radius: 4px;
    display: flex;
    align-items: center;
    padding-left: 3px;
    font-size: 11px;
}

.tbtn svg {
    flex: none;
}

.tbtn span {
    flex: 1;
    text-align: center;
}

.tbtn.off {
    background: #f3f3f3;
    color: #b5b5b5;
}

.tbtn.wide {
    width: 148px;
    padding-left: 5px;
}

.tbtn.wide span {
    padding-left: 5px;
    text-align: left;
    letter-spacing: -0.35px;
    white-space: nowrap;
}

/* Durum cubugu */
.statusbar {
    height: 21px;
    flex: none;
    display: flex;
    align-items: center;
    gap: 18px;
    padding-left: 270px;
    font-size: 12px;
    font-weight: bold;
    letter-spacing: 0.1px;
    color: #333;
}

.val {
    font-style: normal;
    letter-spacing: 1.150px;
}

.lles {
    width: 85px;
    height: 21px;
    margin-left: auto;
    background: #80ff00;
    display: flex;
    align-items: center;
    justify-content: center;
    font-family: 'Liberation Serif', serif;
    font-size: 12px;
    color: #3c6b2a;
    border-left: 1px solid #bbb;
}

.lles small {
    font-family: 'DejaVu Sans', sans-serif;
    font-size: 8px;
    font-weight: normal;
    color: #4c8a2c;
}

.link {
    font-size: 12.500px;
    letter-spacing: 0;
    color: #0a63b8;
    white-space: nowrap;
}

.l1 { margin-left: -4px; }
.l2 { margin-left: 8px; padding-right: 1px; }
```
